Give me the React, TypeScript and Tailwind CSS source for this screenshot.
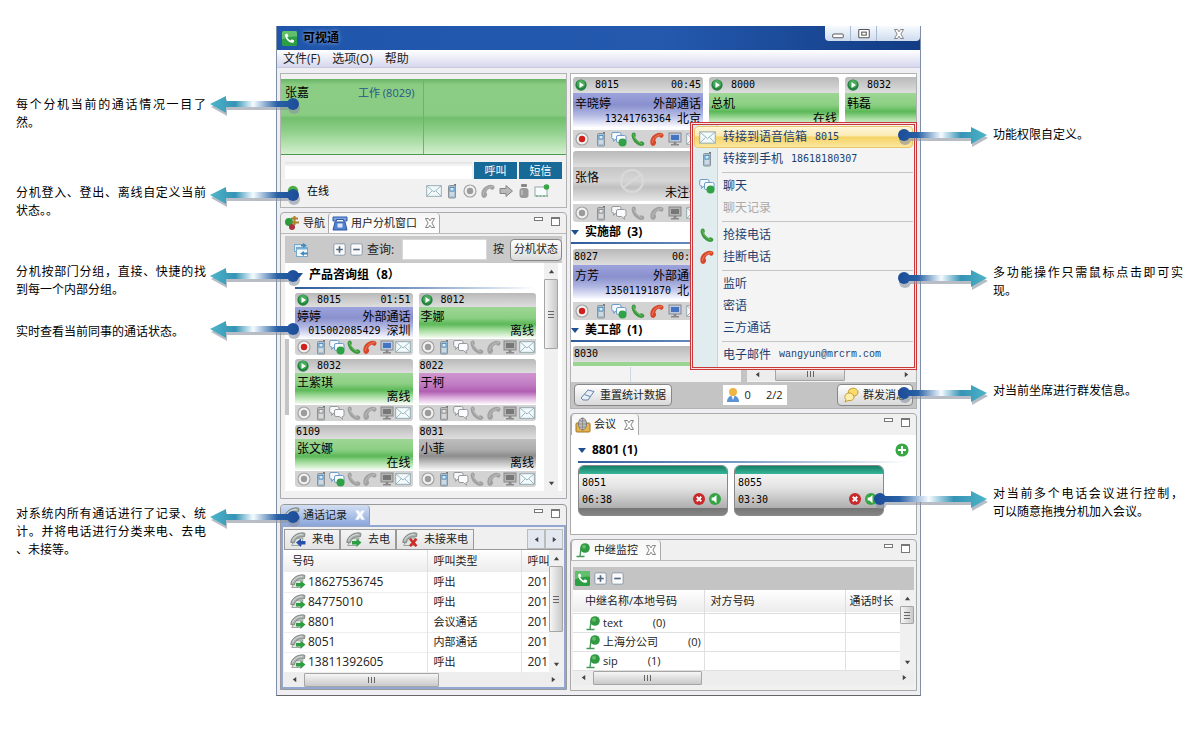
import type { ReactNode } from 'react'
import clsx from 'clsx'

// ── Types ─────────────────────────────────────────────────────────────
type Tone = 'blue' | 'green' | 'purple' | 'gray' | 'off'

interface Extension {
  number: string
  name: string
  tone: Tone
  play?: boolean
  time?: string
  status?: string
  phone?: string
  detail?: string
  active?: boolean
  mobile?: boolean
  chat?: boolean
}

interface Note {
  lines: string[]
  gap: string
  arrow: string
  long?: boolean
}

// ── Data ──────────────────────────────────────────────────────────────
const leftNotes: Note[] = [
  { lines: ['每个分机当前的通话情况一目了', '然。'], gap: 'mt-[70px]', arrow: '-top-px' },
  { lines: ['分机登入、登出、离线自定义当前', '状态。。'], gap: 'mt-[52px]', arrow: 'top-[2px]' },
  { lines: ['分机按部门分组，直接、快捷的找', '到每一个内部分组。'], gap: 'mt-[43px]', arrow: 'top-[4px]' },
  { lines: ['实时查看当前同事的通话状态。'], gap: 'mt-[24px]', arrow: '-top-[3px]' },
  { lines: ['对系统内所有通话进行了记录、统', '计。并将电话进行分类来电、去电', '、未接等。'], gap: 'mt-[164px]', arrow: 'top-[3px]' },
]

const rightNotes: Note[] = [
  { lines: ['功能权限自定义。'], gap: 'mt-[100px]', arrow: 'top-0' },
  { lines: ['多功能操作只需鼠标点击即可实', '现。'], gap: 'mt-[120px]', arrow: 'top-[5px]' },
  { lines: ['对当前坐席进行群发信息。'], gap: 'mt-[82px]', arrow: 'top-[2px]' },
  { lines: ['对当前多个电话会议进行控制，', '可以随意拖拽分机加入会议。'], gap: 'mt-[85px]', arrow: 'top-[5px]', long: true },
]

const groupMembers: Extension[] = [
  { number: '8015', name: '婷婷', tone: 'blue', play: true, time: '01:51', status: '外部通话', phone: '015002085429', detail: '深圳', active: true },
  { number: '8012', name: '李娜', tone: 'green', play: true, detail: '离线', mobile: true },
  { number: '8032', name: '王紫琪', tone: 'green', play: true, detail: '离线' },
  { number: '8022', name: '于柯', tone: 'purple' },
  { number: '6109', name: '张文娜', tone: 'green', detail: '在线', mobile: true, chat: true },
  { number: '8031', name: '小菲', tone: 'gray', detail: '离线', mobile: true },
]

const callLog = [
  { number: '18627536745', kind: '呼出' },
  { number: '84775010', kind: '呼出' },
  { number: '8801', kind: '会议通话' },
  { number: '8051', kind: '内部通话' },
  { number: '13811392605', kind: '呼出' },
]

const trunks = [
  { name: 'text', count: '(0)' },
  { name: '上海分公司', count: '(0)' },
  { name: 'sip', count: '(1)' },
]

const toneClass: Record<Tone, string> = {
  blue: 'bg-[linear-gradient(#9ca3dc,#8990cd_35%,#b3b9e4_65%,#fafaff)]',
  green: 'bg-[linear-gradient(#9ed695,#8ccf83_35%,#5bb958_55%,#a5dc9e_75%,#f4fcf2)]',
  purple: 'bg-[linear-gradient(#cf96d0,#c27ec4_35%,#b05fb2_60%,#dcaedd_80%,#fbf4fb)]',
  gray: 'bg-[linear-gradient(#bdbdbd,#acacac_35%,#8d8d8d_55%,#bebebe_75%,#f6f6f6)]',
  off: 'bg-[linear-gradient(#c6c6c6,#d6d6d6_40%,#c0c0c0_60%,#e6e6e6)]',
}

// ── Icons ─────────────────────────────────────────────────────────────
function Svg({ children, className = 'size-4' }: { children: ReactNode; className?: string }) {
  return (
    <svg viewBox="0 0 16 16" className={clsx('shrink-0', className)} fill="none" aria-hidden="true">
      {children}
    </svg>
  )
}

function PlayIcon() {
  return (
    <Svg className="size-3">
      <circle cx="8" cy="8" r="7.5" fill="#23843f" />
      <circle cx="8" cy="6.5" r="5.5" fill="#48a85d" />
      <path d="M6 4l6 4-6 4z" fill="#fff" />
    </Svg>
  )
}

function RecordIcon({ on }: { on?: boolean }) {
  return (
    <Svg>
      <circle cx="8" cy="8" r="6" fill="#f1f1f1" stroke="#a3a3a3" strokeWidth="1.2" />
      <circle cx="8" cy="8" r="3.2" fill={on ? '#d0201b' : '#9b9b9b'} />
    </Svg>
  )
}

function MobileIcon({ on }: { on?: boolean }) {
  return (
    <Svg>
      <rect x="10" y="1" width="2" height="3" fill="#777" />
      <rect x="4.500" y="2.500" width="7" height="12.500" rx="1" fill={on ? '#a9c1d2' : '#bcbcbc'} stroke="#8a9298" />
      <rect x="6" y="4.500" width="4" height="3.500" fill={on ? '#d5ecfb' : '#e9e9e9'} stroke={on ? '#3f86bd' : '#888'} strokeWidth=".8" />
      <path d="M6 10h4M6 12h4" stroke="#f2f2f2" />
    </Svg>
  )
}

function ChatIcon({ on }: { on?: boolean }) {
  const line = on ? '#6d9cc7' : '#999'
  return (
    <Svg>
      <path d="M2 1.500h6.500q1.500 0 1.500 1.500v3.500q0 1.500-1.500 1.500H5L2.500 10.500 3 8H2Q.7 8 .7 6.500V3Q.7 1.500 2 1.500z" fill="#f4f8fc" stroke={line} strokeLinejoin="round" />
      <path d="M7 4.500h6.500q1.500 0 1.500 1.500v4q0 1.500-1.500 1.500H13l.5 2.800L10.500 11.500H7q-1.500 0-1.500-1.500V6Q5.500 4.500 7 4.500z" fill="#fafcff" stroke={line} strokeLinejoin="round" />
      {on && <circle cx="11.500" cy="11.500" r="4" fill="#2fa147" />}
    </Svg>
  )
}

function AnswerIcon({ on }: { on?: boolean }) {
  return (
    <Svg>
      <path
        d="M2 2.500C3.200 1 5 1.300 5.600 3c.5 1.500.2 2.300-.5 3 .9 2 2.600 3.800 4.700 4.900.9-.8 2-.8 3.400.1 1.600 1 1.500 2.700 0 3.600-1.800 1-5 .2-7.800-2.600C2.600 9.200.8 4.800 2 2.500z"
        fill={on ? '#3b9a3f' : '#a0a0a0'}
      />
      <path d="M3.500 3c.5 4 3 7.500 8.500 10" stroke={on ? '#7cc36f' : '#c2c2c2'} strokeWidth=".8" />
    </Svg>
  )
}

function HangupIcon({ on }: { on?: boolean }) {
  return (
    <Svg>
      <path
        d="M2.400 14.300C.9 12.500.8 8.500 3.500 5.300 6.500 2 10.500.9 13.200 2.200c1.800.9 1.700 3 .4 4-1.100.9-2.600.6-3.400-.7C8.300 6 6.800 7.300 6.200 9.500c1.100.8 1.200 2.200.5 3.500-.9 1.900-3 2.700-4.300 1.300z"
        fill={on ? '#d9472b' : '#a2a2a2'}
      />
      <path d="M3.500 12c0-4 3-8 9.500-8.500" stroke={on ? '#ef8d70' : '#c4c4c4'} strokeWidth=".8" />
    </Svg>
  )
}

function MonitorIcon({ on }: { on?: boolean }) {
  return (
    <Svg>
      <rect x="2" y="2" width="12" height="9" fill={on ? '#b9c8e3' : '#b4b4b4'} stroke="#888" />
      <rect x="4" y="4" width="8" height="5" fill={on ? '#4573bd' : '#777'} />
      <path d="M6.500 11h3v2h2.500v1.500H4V13h2.500z" fill="#8a8a8a" />
    </Svg>
  )
}

function MailIcon({ className }: { className?: string }) {
  return (
    <Svg className={className}>
      <rect x=".7" y="2.700" width="14.600" height="10.600" fill="#f3fafc" stroke="#8fa6ae" strokeWidth=".9" />
      <path d="M1 3l7 6 7-6M1 13l5-5M15 13l-5-5" stroke="#8fb0bb" strokeWidth=".9" />
    </Svg>
  )
}

function HandsetLogo({ className = 'size-4' }: { className?: string }) {
  return (
    <Svg className={className}>
      <rect width="16" height="16" rx="2" fill="#2c9e43" />
      <path d="M0 2a2 2 0 012-2h12a2 2 0 012 2v4Q8 5 0 9z" fill="#62bf6b" />
      <path d="M3.500 3.500l2-.8 1.300 2.600-1.200 1.300c.8 1.600 2 2.700 3.600 3.500l1.300-1.300 2.600 1.400-.7 2C8.500 14 2.500 8.500 3.500 3.500z" fill="#fff" />
    </Svg>
  )
}

function CallIcon({ kind }: { kind: 'in' | 'out' | 'missed' }) {
  return (
    <Svg>
      <path d="M4.500 6.500L1.800 13.500h9.700L13 6z" fill="#dfe5e1" stroke="#8b918e" strokeWidth=".8" />
      <path d="M.8 10.500C1 5.500 5.500.8 13 .8l2 .7-.5 3.200-4 .3C7 5 5.200 7.500 4.300 10.800z" fill="#a9b0ac" stroke="#747a77" strokeWidth=".8" />
      <path d="M2.500 8.500C4 5 7.500 2.500 12.500 2.300" stroke="#dfe3e1" strokeWidth=".9" />
      {kind === 'out' && <path d="M6 9h4.500V6.500l5 4-5 4.500v-2.500H6z" fill="#2f9e43" />}
      {kind === 'in' && <path d="M15.500 9H11V6.500l-5 4 5 4.500v-2.500h4.500z" fill="#2750ad" />}
      {kind === 'missed' && <path d="M7 7.500l2-1.500 2 2.500L13.500 6l2 1.500-2.500 3 2.500 3-2 1.500-2.500-2.500L9 15l-2-1.500 2.500-3z" fill="#cf2a25" />}
    </Svg>
  )
}

function TrunkIcon() {
  return (
    <Svg>
      <path d="M1.500 14.500h8M5 14.500L6 6" stroke="#45975a" strokeWidth="1.400" />
      <circle cx="10" cy="6" r="4.800" fill="#2f9a41" />
      <circle cx="9" cy="4.800" r="2" fill="#62bc68" />
    </Svg>
  )
}

function NavIcon() {
  return (
    <Svg>
      <circle cx="5" cy="7" r="4" fill="#2e9b3d" />
      <circle cx="8" cy="12" r="3" fill="#a7333d" />
      <path d="M10.500 1v9M7 3.500h7M8 7.500h7" stroke="#a8802e" strokeWidth="2" />
    </Svg>
  )
}

function DeskPhoneIcon() {
  return (
    <Svg>
      <path d="M3 7h10l2 8H1z" fill="#5682cd" stroke="#2b58a5" />
      <path d="M1 2h14v4h-3.500V4.500h-7V6H1z" fill="#7ca2e2" stroke="#2b58a5" />
      <rect x="5.500" y="8.500" width="5" height="4" fill="#d9e6fb" />
    </Svg>
  )
}

function ConferenceIcon() {
  return (
    <Svg>
      <rect x="1" y="6" width="14" height="9" rx="1" fill="#e6b44b" stroke="#a27622" />
      <ellipse cx="7.500" cy="7" rx="4" ry="6" fill="#c2c2c2" stroke="#777" />
      <path d="M5 4h5M4 7h7M5 10h5M7.500 1v12" stroke="#848484" strokeWidth=".8" />
    </Svg>
  )
}

function SyncWindowIcon() {
  return (
    <Svg>
      <rect x="1.500" y="2.500" width="9" height="7" fill="#dcedf7" stroke="#79a8c8" />
      <rect x="3.500" y="5.500" width="11" height="9" fill="#f3f8fb" stroke="#79a8c8" />
      <path d="M4 6.500h10" stroke="#79b0d6" strokeWidth="2" />
      <path d="M10 1l4 2.500L10 6V4.500H8v-2h2zM11 9l-4 2.500 4 2.500v-1.500h4v-2h-4z" fill="#3f8bc3" />
    </Svg>
  )
}

function CloseX({ filled }: { filled?: boolean }) {
  return (
    <Svg className="size-3">
      <path
        d="M2 2h4l2 3 2-3h4l-3.500 6L14 14h-4l-2-3-2 3H2l3.500-6z"
        fill="#fff"
        stroke={filled ? '#dfe8f8' : '#777'}
        strokeWidth="1.200"
      />
    </Svg>
  )
}

function Caret() {
  return (
    <svg viewBox="0 0 8 5" className="h-[5px] w-2 shrink-0" aria-hidden="true">
      <path d="M0 0h8L4 5z" fill="#1f4f8f" />
    </svg>
  )
}

function SquareSign({ minus }: { minus?: boolean }) {
  return (
    <Svg className="size-[13px]">
      <rect x="1" y="1" width="14" height="14" rx="2" fill="#fafafa" stroke="#8797aa" strokeWidth="1.200" />
      <path d={minus ? 'M4 8h8' : 'M4 8h8M8 4v8'} stroke="#516580" strokeWidth="2" />
    </Svg>
  )
}

// ── Shared pieces ─────────────────────────────────────────────────────
function IconButton({ label, children, className }: { label: string; children: ReactNode; className?: string }) {
  return (
    <button type="button" aria-label={label} className={clsx('flex items-center justify-center', className)}>
      {children}
    </button>
  )
}

function Digits({ children, className }: { children: ReactNode; className?: string }) {
  return <span className={clsx("font-['DejaVu_Sans_Mono',monospace] text-[10px]", className)}>{children}</span>
}

function ArrowTip({ dir }: { dir: 'left' | 'right' | 'up' | 'down' }) {
  const paths = { left: 'M6 1v6L2 4z', right: 'M2 1v6l4-3z', up: 'M1 6h6L4 2z', down: 'M1 2h6L4 6z' }
  return (
    <svg viewBox="0 0 8 8" className="size-[7px]" aria-hidden="true">
      <path d={paths[dir]} fill="#444" />
    </svg>
  )
}

function HScroll({ thumb }: { thumb: string }) {
  return (
    <div className="flex h-[14px] items-stretch bg-[#ededed]">
      <IconButton label="向左滚动" className="w-5"><ArrowTip dir="left" /></IconButton>
      <div className="flex min-w-0 flex-1">
        <div className={clsx('flex items-center justify-center gap-0.5 rounded-[1px] border border-[#a5a5a5] bg-linear-to-b from-[#f6f6f6] to-[#c9c9c9]', thumb)}>
          <i className="h-1.5 w-px bg-[#666]" />
          <i className="h-1.5 w-px bg-[#666]" />
          <i className="h-1.5 w-px bg-[#666]" />
        </div>
      </div>
      <IconButton label="向右滚动" className="w-5"><ArrowTip dir="right" /></IconButton>
    </div>
  )
}

function VScroll({ thumb }: { thumb: string }) {
  return (
    <div className="flex w-[14px] shrink-0 flex-col bg-[#f0f0f0]">
      <IconButton label="向上滚动" className="h-4"><ArrowTip dir="up" /></IconButton>
      <div className="flex-1">
        <div className={clsx('flex flex-col items-center justify-center gap-0.5 rounded-[1px] border border-[#a5a5a5] bg-linear-to-r from-[#f6f6f6] to-[#c9c9c9]', thumb)}>
          <i className="h-px w-1.5 bg-[#666]" />
          <i className="h-px w-1.5 bg-[#666]" />
          <i className="h-px w-1.5 bg-[#666]" />
        </div>
      </div>
      <IconButton label="向下滚动" className="h-4"><ArrowTip dir="down" /></IconButton>
    </div>
  )
}

function PaneControls() {
  return (
    <div className="ml-auto flex items-start gap-2 pt-1 pr-1.5">
      <button type="button" aria-label="最小化" className="h-1 w-[9px] border border-[#777] bg-white" />
      <button type="button" aria-label="最大化" className="h-[9px] w-[9px] border border-t-2 border-[#777] bg-white" />
    </div>
  )
}

function GroupTitle({ children, className, end }: { children: ReactNode; className?: string; end?: ReactNode }) {
  return (
    <div>
      <div className={clsx('flex items-center gap-1.5 text-xs font-bold text-black', className)}>
        <Caret />
        <h3>{children}</h3>
        {end}
      </div>
      <div className="h-0.5 bg-linear-to-r from-[#2e5c9e] via-[#7e9cc6] to-white" />
    </div>
  )
}

function ActionIcons({ ext }: { ext: Extension }) {
  const on = ext.active
  return (
    <>
      <IconButton label="录音"><RecordIcon on={on} /></IconButton>
      <IconButton label="手机"><MobileIcon on={on || ext.mobile} /></IconButton>
      <IconButton label="聊天"><ChatIcon on={on || ext.chat} /></IconButton>
      <IconButton label="抢接"><AnswerIcon on={on} /></IconButton>
      <IconButton label="挂断"><HangupIcon on={on} /></IconButton>
      <IconButton label="监听"><MonitorIcon on={on} /></IconButton>
      <IconButton label="邮件"><MailIcon /></IconButton>
    </>
  )
}

function ExtensionCard({ ext, large }: { ext: Extension; large?: boolean }) {
  return (
    <article className={clsx('overflow-hidden rounded-t-[3px] text-xs whitespace-nowrap text-black', large && 'w-[130px] shrink-0')}>
      <div className={clsx('flex items-center bg-linear-to-b from-[#b9b9b9] to-[#dedede]', large ? 'h-4' : 'h-[14px]', ext.play ? 'gap-2 px-0.5' : 'px-px')}>
        {ext.play && <PlayIcon />}
        <Digits>{ext.number}</Digits>
        {ext.time && <Digits className="ml-auto">{ext.time}</Digits>}
      </div>
      <div className={clsx('relative px-0.5 pt-[3px]', toneClass[ext.tone], large ? 'h-[34px] leading-[15px]' : 'h-[31px] leading-[14px]')}>
        {ext.tone === 'off' && (
          <svg viewBox="0 0 28 28" className="absolute top-0 left-[45px] size-7" aria-hidden="true">
            <circle cx="14" cy="14" r="11" fill="none" stroke="#d9d9d9" strokeWidth="2" />
            <path d="M6 20L22 8" stroke="#d9d9d9" strokeWidth="2" />
          </svg>
        )}
        <div className="flex justify-between">
          <span>{ext.name}</span>
          <span>{ext.status}</span>
        </div>
        <div className="flex items-center justify-end gap-1.5">
          {ext.phone && <Digits>{ext.phone}</Digits>}
          <span>{ext.detail}</span>
        </div>
      </div>
      <div className={clsx('flex items-center justify-between rounded-b-[3px] bg-[#d3d3d3] px-px', large ? 'mt-[3px] h-[18px]' : 'mt-px h-4')}>
        <ActionIcons ext={ext} />
      </div>
    </article>
  )
}

function Tab({ icon, label, active, closable, tone }: { icon: ReactNode; label: string; active?: boolean; closable?: boolean; tone?: 'blue' }) {
  return (
    <button
      type="button"
      className={clsx(
        'flex h-full items-center gap-[3px] px-[3px] text-[11px] text-[#222]',
        tone === 'blue' && 'rounded-t border-r border-[#8b9dc9] bg-linear-to-b from-[#d3def2] to-[#8da7dc]',
        active && !tone && 'rounded-t border-x border-[#aaa] bg-linear-to-b from-[#f6f6f6] to-white',
      )}
    >
      {icon}
      <span>{label}</span>
      {closable && <span className="ml-1"><CloseX filled={tone === 'blue'} /></span>}
    </button>
  )
}

// ── Left panels ───────────────────────────────────────────────────────
function StatusPanel() {
  return (
    <section className="border border-[#b3b3b3] bg-[#f1f1f1] pt-[5px]">
      <div className="grid h-[76px] grid-cols-2 border-b border-[#4f9a51] bg-[linear-gradient(#69b467,#8bcd83_8%,#8acc83_48%,#72bf6d_52%,#8fd08a_70%,#d3efce)]">
        <div className="flex items-start justify-between border-r border-[#6fb26d] px-1 pt-1.5 pr-2">
          <span className="text-xs text-black">张嘉</span>
          <span className="text-[11px] text-[#28568b]">工作 (8029)</span>
        </div>
        <div />
      </div>
      <div className="flex gap-0.5 px-1 pt-[7px]">
        <input aria-label="呼叫号码" className="h-[17px] min-w-0 flex-1 bg-linear-to-b from-[#e0e0e0] to-white to-30%" />
        <button type="button" className="h-[17px] w-[43px] bg-[#176a98] text-[11px] leading-[17px] text-white">呼叫</button>
        <button type="button" className="h-[17px] w-[43px] bg-[#176a98] text-[11px] leading-[17px] text-white">短信</button>
      </div>
      <div className="mb-1 flex h-6 items-center pr-4 pl-1.5">
        <Svg className="size-3"><circle cx="8" cy="8" r="7" fill="#4cae3f" /></Svg>
        <span className="ml-2 text-[11px] text-black">在线</span>
        <div className="ml-auto flex items-center gap-0.5">
          <IconButton label="邮件"><MailIcon /></IconButton>
          <IconButton label="手机"><MobileIcon on /></IconButton>
          <IconButton label="录音"><RecordIcon /></IconButton>
          <IconButton label="挂断"><HangupIcon /></IconButton>
          <IconButton label="转接">
            <Svg><path d="M2 5.500h6V2.500l6.500 5.500L8 13.500v-3H2z" fill="#b9b9b9" stroke="#858585" /></Svg>
          </IconButton>
          <IconButton label="保持">
            <Svg>
              <rect x="5" y="1" width="6" height="3" rx="1" fill="#888" />
              <rect x="3.500" y="5" width="9" height="10" rx="3" fill="#9a9a9a" />
              <path d="M6 7v5" stroke="#d5d5d5" />
            </Svg>
          </IconButton>
          <IconButton label="新消息">
            <Svg>
              <rect x="1" y="4" width="12" height="9" fill="#f6fbfc" stroke="#96a9ad" />
              <path d="M2 13h12" stroke="#42a451" strokeDasharray="2 1.500" />
              <circle cx="12.500" cy="4" r="2.800" fill="#39a545" />
            </Svg>
          </IconButton>
        </div>
      </div>
    </section>
  )
}

function UserPanel() {
  return (
    <section className="rounded-t border border-[#aaa] bg-[#f0f0f0] pb-[7px]">
      <div className="flex h-[21px] border-b border-[#bbb]">
        <Tab icon={<NavIcon />} label="导航" />
        <Tab icon={<DeskPhoneIcon />} label="用户分机窗口" active closable />
        <PaneControls />
      </div>
      <div className="px-1 pt-0.5">
        <div className="flex h-[27px] items-center gap-1 bg-[#c9c9c9] pl-2">
          <IconButton label="同步"><SyncWindowIcon /></IconButton>
          <IconButton label="展开" className="ml-5"><SquareSign /></IconButton>
          <IconButton label="折叠"><SquareSign minus /></IconButton>
          <label htmlFor="ext-query" className="text-xs text-[#222]">查询:</label>
          <input id="ext-query" className="ml-1 h-[21px] min-w-0 flex-1 border border-[#d8d8d8] bg-white" />
          <span className="px-0.5 text-[11px] text-[#222]">按</span>
          <button type="button" className="h-[22px] rounded-sm border border-[#888] bg-linear-to-b from-white to-[#dcdcdc] px-[3px] text-[11px] text-[#222]">分机状态</button>
        </div>
        <div className="flex bg-white">
          <div className="my-auto h-[76px] w-1 bg-[#c4c4c4]" />
          <div className="min-w-0 flex-1 pr-2 pb-1 pl-1.5">
            <GroupTitle className="h-6">产品咨询组（8）</GroupTitle>
            <div className="grid grid-cols-2 gap-x-1.5 gap-y-1 pt-1">
              {groupMembers.map((ext) => (
                <ExtensionCard key={ext.number} ext={ext} />
              ))}
            </div>
          </div>
          <VScroll thumb="h-[70px]" />
          <div className="w-1" />
        </div>
      </div>
    </section>
  )
}

function SubTab({ kind, label }: { kind: 'in' | 'out' | 'missed'; label: string }) {
  return (
    <button type="button" className="flex items-center gap-1.5 border border-b-0 border-[#999] bg-linear-to-b from-[#f4f4f4] to-[#e4e4e4] px-[5px]">
      <CallIcon kind={kind} />
      {label}
    </button>
  )
}

function CallLogPanel() {
  return (
    <section className="mt-px rounded-t border border-[#999] bg-[#f0f0f0]">
      <div className="flex h-5">
        <Tab icon={<CallIcon kind="in" />} label="通话记录" tone="blue" closable />
        <PaneControls />
      </div>
      <div className="border-2 border-[#93a6cf] px-px pt-0.5">
        <div className="flex h-[21px] items-stretch border-b border-[#999] text-[11px] text-[#222]">
          <SubTab kind="in" label="来电" />
          <SubTab kind="out" label="去电" />
          <SubTab kind="missed" label="未接来电" />
          <IconButton label="上一个" className="ml-auto w-[18px] border border-[#bbb] bg-[#e3e8f0]"><ArrowTip dir="left" /></IconButton>
          <IconButton label="下一个" className="w-[18px] border border-[#bbb] bg-[#e3e8f0]"><ArrowTip dir="right" /></IconButton>
        </div>
        <div className="flex bg-white">
          <div className="min-w-0 flex-1 overflow-hidden">
            <table className="w-full table-fixed text-left whitespace-nowrap text-[#222]">
              <colgroup>
                <col className="w-[143px]" />
                <col className="w-[94px]" />
                <col />
              </colgroup>
              <thead>
                <tr className="h-[22px] bg-linear-to-b from-white to-[#ececec] text-[11px]">
                  <th className="border-r border-[#ddd] pl-2 font-normal">号码</th>
                  <th className="border-r border-[#ddd] pl-1.5 font-normal">呼叫类型</th>
                  <th className="overflow-hidden pl-1.5 font-normal">呼叫</th>
                </tr>
              </thead>
              <tbody>
                {callLog.map((call) => (
                  <tr key={call.number} className="h-[20px] border-b border-[#eee]">
                    <td className="border-r border-[#e4e4e4] p-0">
                      <span className="flex items-center gap-0.5 pl-1.5 text-xs leading-4"><CallIcon kind="out" />{call.number}</span>
                    </td>
                    <td className="border-r border-[#e4e4e4] py-0 pl-1.5 text-[11px] leading-4">{call.kind}</td>
                    <td className="overflow-hidden py-0 pl-1.5 text-xs leading-4">201</td>
                  </tr>
                ))}
              </tbody>
            </table>
          </div>
          <VScroll thumb="h-[66px]" />
        </div>
        <HScroll thumb="w-[135px]" />
      </div>
    </section>
  )
}

// ── Right panels ──────────────────────────────────────────────────────
function MenuRow({ icon, children, highlight, disabled }: { icon?: ReactNode; children: ReactNode; highlight?: boolean; disabled?: boolean }) {
  return (
    <button
      type="button"
      role="menuitem"
      disabled={disabled}
      className={clsx(
        'flex h-[22px] w-full items-center rounded-sm border text-left text-xs whitespace-nowrap',
        disabled ? 'text-[#aaa]' : 'text-[#1c3f70]',
        highlight ? 'border-[#e8c66a] bg-[linear-gradient(#fdf6dc,#fbe9b0_45%,#f6d264_50%,#fbe7a0)]' : 'border-transparent',
      )}
    >
      <span className="flex w-7 shrink-0 items-center pl-1">{icon}</span>
      {children}
    </button>
  )
}

function MenuLine() {
  return (
    <div role="separator" className="flex h-[5px] items-center pl-7">
      <div className="h-px flex-1 bg-[#c4c4c4]" />
    </div>
  )
}

function ContextMenu() {
  return (
    <div className="absolute top-12 -right-px z-10 w-[227px] border border-[#c8373a] bg-[#fbe3e3] p-px">
      <div role="menu" className="border border-[#c8373a] bg-[linear-gradient(90deg,#e0ecee_24px,#c9d3d5_24px,#c9d3d5_25px,#f4f4f4_25px)] p-px">
        <MenuRow icon={<MailIcon className="size-[17px]" />} highlight>转接到语音信箱<Digits className="ml-2">8015</Digits></MenuRow>
        <MenuRow icon={<MobileIcon on />}>转接到手机<Digits className="ml-2">18618180307</Digits></MenuRow>
        <MenuLine />
        <MenuRow icon={<ChatIcon on />}>聊天</MenuRow>
        <MenuRow disabled>聊天记录</MenuRow>
        <MenuLine />
        <MenuRow icon={<AnswerIcon on />}>抢接电话</MenuRow>
        <MenuRow icon={<HangupIcon on />}>挂断电话</MenuRow>
        <MenuLine />
        <MenuRow>监听</MenuRow>
        <MenuRow>密语</MenuRow>
        <MenuRow>三方通话</MenuRow>
        <MenuLine />
        <MenuRow>电子邮件<span className="ml-2 font-['Liberation_Mono',monospace] text-[10px]">wangyun@mrcrm.com</span></MenuRow>
      </div>
    </div>
  )
}

function BoardPanel() {
  return (
    <section className="relative border border-[#b3b3b3] bg-white">
      <div className="overflow-hidden pt-[3px]">
        <div className="flex gap-1.5 pl-0.5">
          <ExtensionCard large ext={{ number: '8015', name: '辛晓婷', tone: 'blue', play: true, time: '00:45', status: '外部通话', phone: '13241763364', detail: '北京', active: true }} />
          <ExtensionCard large ext={{ number: '8000', name: '总机', tone: 'green', play: true, detail: '在线' }} />
          <ExtensionCard large ext={{ number: '8032', name: '韩磊', tone: 'green', play: true }} />
        </div>
        <div className="flex pt-[3px] pl-0.5">
          <ExtensionCard large ext={{ number: '', name: '张恪', tone: 'off', detail: '未注册' }} />
        </div>
        <GroupTitle className="h-5">实施部&nbsp;&nbsp;(3)</GroupTitle>
        <div className="flex pt-[5px] pl-0.5">
          <ExtensionCard large ext={{ number: '8027', name: '方芳', tone: 'blue', time: '00:35', status: '外部通话', phone: '13501191870', detail: '北京', active: true }} />
        </div>
        <GroupTitle className="h-5">美工部&nbsp;&nbsp;(1)</GroupTitle>
        <div className="flex h-6 overflow-hidden pt-1 pl-0.5">
          <ExtensionCard large ext={{ number: '8030', name: '', tone: 'green' }} />
        </div>
      </div>
      <div className="flex h-4 bg-[#f3f3f3] pt-px">
        <div className="w-[60px] border-r border-[#ccd8e6]" />
        <div className="flex-1" />
        <div className="w-1.5 bg-[#c4c4c4]" />
        <div className="w-[169px]"><HScroll thumb="ml-2 w-[70px]" /></div>
      </div>
      <div className="flex h-[26px] items-center bg-[#c4c4c4] px-[3px] text-[11px] text-[#222]">
        <button type="button" className="flex h-[22px] items-center gap-1 rounded-sm border border-[#888] bg-linear-to-b from-white to-[#d9d9d9] px-[5px]">
          <Svg>
            <path d="M1 11l7-8 6 1.500-6 8.500H3z" fill="#e9eff7" stroke="#6484ab" />
            <path d="M4.500 7.500L10 9.500" stroke="#6484ab" />
          </Svg>
          重置统计数据
        </button>
        <div className="mx-auto flex h-5 w-16 items-center bg-white pl-0.5">
          <Svg>
            <path d="M2 15c0-9 12-9 12 0z" fill="#5b93d6" />
            <path d="M6.500 9L8 13l1.500-4z" fill="#fff" />
            <circle cx="8" cy="5" r="4" fill="#f0b542" />
          </Svg>
          <span className="ml-1">0</span>
          <span className="mr-1 ml-auto">2/2</span>
        </div>
        <button type="button" className="flex h-[22px] items-center gap-1 rounded-sm border border-[#888] bg-linear-to-b from-white to-[#d9d9d9] px-[5px]">
          <Svg>
            <path d="M7 2c4-2 8 0 8 3s-3 5-7 4L5 10l1-2.500C5 6 5 3 7 2z" fill="#f9dc71" stroke="#c89c2c" />
            <path d="M4 6.500c3-1.500 7 .5 7 3.500s-3 4-6 3.500L2 15l.8-2.500C1 10 2 7.500 4 6.500z" fill="#fdeeab" stroke="#c89c2c" />
          </Svg>
          群发消息
        </button>
      </div>
      <ContextMenu />
    </section>
  )
}

function ConferenceCard({ number, time }: { number: string; time: string }) {
  return (
    <article className="w-[150px] overflow-hidden rounded-md border border-[#888] bg-[linear-gradient(#fff,#e2e2e2_45%,#aeaeae_86%,#757575_86%,#858585)] text-black">
      <div className="h-2 bg-linear-to-b from-[#148066] to-[#38b699]" />
      <div className="px-[3px] pb-2">
        <div className="flex h-[17px] items-center"><Digits>{number}</Digits></div>
        <div className="flex h-4 items-center">
          <Digits className="mr-auto">{time}</Digits>
          <IconButton label="移出会议">
            <Svg className="size-3">
              <circle cx="8" cy="8" r="8" fill="#c8292b" />
              <path d="M5 5l6 6M11 5l-6 6" stroke="#fff" strokeWidth="2.500" />
            </Svg>
          </IconButton>
          <IconButton label="静音" className="mr-[3px] ml-1">
            <Svg className="size-3">
              <circle cx="8" cy="8" r="8" fill="#37a444" />
              <path d="M3.500 6H6l4-3.500v11L6 10H3.500z" fill="#fff" />
            </Svg>
          </IconButton>
        </div>
      </div>
    </article>
  )
}

function ConferencePanel() {
  return (
    <section className="rounded-t border border-[#aaa] bg-[#f0f0f0]">
      <div className="flex h-[21px]">
        <Tab icon={<ConferenceIcon />} label="会议" active closable />
        <PaneControls />
      </div>
      <div className="bg-white px-[7px] pt-1 pb-[18px]">
        <GroupTitle
          className="h-[22px]"
          end={
            <IconButton label="新建会议" className="ml-auto">
              <Svg className="size-[14px]">
                <circle cx="8" cy="8" r="7.500" fill="#38a845" />
                <path d="M3.500 8h9M8 3.500v9" stroke="#fff" strokeWidth="2.200" />
              </Svg>
            </IconButton>
          }
        >
          8801 (1)
        </GroupTitle>
        <div className="flex gap-1.5 pt-0.5">
          <ConferenceCard number="8051" time="06:38" />
          <ConferenceCard number="8055" time="03:30" />
        </div>
      </div>
    </section>
  )
}

function TrunkPanel() {
  return (
    <section className="rounded-t border border-[#aaa] bg-[#f0f0f0] pb-[5px]">
      <div className="flex h-[21px] border-b border-[#bbb]">
        <Tab icon={<TrunkIcon />} label="中继监控" active closable />
        <PaneControls />
      </div>
      <div className="px-0.5 pt-1.5">
        <div className="flex h-[23px] items-center gap-1 bg-[#c4c4c4] pl-0.5">
          <IconButton label="拨号"><HandsetLogo className="size-[15px]" /></IconButton>
          <IconButton label="展开"><SquareSign /></IconButton>
          <IconButton label="折叠"><SquareSign minus /></IconButton>
        </div>
        <div className="flex bg-white">
          <div className="min-w-0 flex-1 overflow-hidden">
            <table className="w-full table-fixed text-left text-[11px] whitespace-nowrap text-[#222]">
              <colgroup>
                <col className="w-[131px]" />
                <col className="w-[141px]" />
                <col />
              </colgroup>
              <thead>
                <tr className="h-[23px] border-b border-[#ddd] bg-linear-to-b from-white to-[#ececec]">
                  <th className="border-r border-[#ddd] pl-3 font-normal">中继名称/本地号码</th>
                  <th className="border-r border-[#ddd] pl-1.5 font-normal">对方号码</th>
                  <th className="pl-1 font-normal">通话时长</th>
                </tr>
              </thead>
              <tbody>
                {trunks.map((trunk) => (
                  <tr key={trunk.name} className="h-[19px] border-b border-[#e0e0e0]">
                    <td className="border-r border-[#e0e0e0] p-0">
                      <span className="flex items-center gap-0.5 pl-3 leading-4">
                        <TrunkIcon />
                        {trunk.name}
                        <span className="ml-7">{trunk.count}</span>
                      </span>
                    </td>
                    <td className="border-r border-[#e0e0e0] p-0" />
                    <td className="p-0" />
                  </tr>
                ))}
              </tbody>
            </table>
          </div>
          <VScroll thumb="h-[18px]" />
        </div>
        <HScroll thumb="w-[109px]" />
      </div>
    </section>
  )
}

// ── Callouts ──────────────────────────────────────────────────────────
function LeftArrow({ className }: { className: string }) {
  return (
    <svg viewBox="0 0 90 22" className={clsx('pointer-events-none absolute -right-[24px] z-20 h-[22px] w-[90px]', className)} aria-hidden="true">
      <defs>
        <linearGradient id="callout-left" gradientUnits="userSpaceOnUse" x1="0" x2="90" y1="0" y2="0">
          <stop offset="0" stopColor="#4fb6c8" />
          <stop offset=".28" stopColor="#3593b5" />
          <stop offset=".48" stopColor="#f4fbff" />
          <stop offset=".75" stopColor="#2760a4" />
          <stop offset="1" stopColor="#1c4b98" />
        </linearGradient>
      </defs>
      <g fill="#8a92a0" opacity=".6">
        <path d="M1 12L17 4v6h66v5H17v6z" />
        <circle cx="84" cy="13" r="6" />
      </g>
      <g fill="url(#callout-left)">
        <path d="M0 9L16 1v5h66v6H16v6z" />
        <circle cx="83" cy="9" r="6" />
      </g>
    </svg>
  )
}

function RightArrow({ className, long }: { className: string; long?: boolean }) {
  const w = long ? 114 : 90
  return (
    <svg
      viewBox={`0 0 ${w} 22`}
      className={clsx('pointer-events-none absolute z-20 h-[22px]', long ? '-left-[47px] w-[114px]' : '-left-[23px] w-[90px]', className)}
      aria-hidden="true"
    >
      <defs>
        <linearGradient id={`callout-right-${w}`} gradientUnits="userSpaceOnUse" x1="0" x2={w} y1="0" y2="0">
          <stop offset="0" stopColor="#1c4b98" />
          <stop offset=".22" stopColor="#2760a4" />
          <stop offset=".48" stopColor="#f4fbff" />
          <stop offset=".7" stopColor="#3593b5" />
          <stop offset="1" stopColor="#4fb6c8" />
        </linearGradient>
      </defs>
      <g fill="#8a92a0" opacity=".6">
        <circle cx="7" cy="13" r="6" />
        <path d={`M8 10H${w - 16}V4L${w} 12 ${w - 16} 21v-6H8z`} />
      </g>
      <g fill={`url(#callout-right-${w})`}>
        <circle cx="6" cy="9" r="6" />
        <path d={`M7 6H${w - 17}V1L${w - 1} 9 ${w - 17} 18v-6H7z`} />
      </g>
    </svg>
  )
}

function NoteText({ lines }: { lines: string[] }) {
  return (
    <p className="w-[190px] text-xs leading-[18px] text-black">
      {lines.map((line, i) => (
        <span key={line} className={clsx('block whitespace-nowrap', i < lines.length - 1 && '[text-align-last:justify]')}>
          {line}
        </span>
      ))}
    </p>
  )
}

// ── Window ────────────────────────────────────────────────────────────
function TitleBar() {
  return (
    <header className="flex h-6 items-center bg-[linear-gradient(90deg,#1f56ab,#2459ae_60%,#123c84)] pl-[5px]">
      <HandsetLogo className="size-[15px]" />
      <h1 className="ml-1.5 text-xs font-bold text-black [text-shadow:0_0_4px_#9db9e6]">可视通</h1>
      <div className="ml-auto flex h-[15px] self-start overflow-hidden rounded-b bg-linear-to-b from-[#f7fafe] to-[#cfdcee]">
        <IconButton label="最小化窗口" className="w-[26px] border-r border-[#a9b9cf]">
          <Svg className="size-3"><rect x="1" y="8" width="14" height="5" rx="1" fill="#fff" stroke="#555" strokeWidth="1.300" /></Svg>
        </IconButton>
        <IconButton label="还原窗口" className="w-[26px] border-r border-[#a9b9cf]">
          <Svg className="size-3">
            <rect x="1" y="2" width="14" height="11" rx="1" fill="#fff" stroke="#555" strokeWidth="1.400" />
            <rect x="5" y="5.500" width="6" height="4" stroke="#555" strokeWidth="1.400" />
          </Svg>
        </IconButton>
        <IconButton label="关闭窗口" className="w-[43px]"><CloseX /></IconButton>
      </div>
    </header>
  )
}

function App() {
  return (
    <div className="grid w-full grid-cols-[276fr_645fr_279fr] bg-white pt-[26px] font-['Liberation_Sans','Noto_Sans_CJK_SC',sans-serif]">
      {/* Left notes */}
      <aside>
        {leftNotes.map((note) => (
          <div key={note.lines[0]} className={clsx('relative pl-4', note.gap)}>
            <NoteText lines={note.lines} />
            <LeftArrow className={note.arrow} />
          </div>
        ))}
      </aside>

      {/* Application window */}
      <main className="min-w-0 self-start border border-t-0 border-[#7f8fa8] border-b-[#666] bg-[#efeff3] font-['Open_Sans','Noto_Sans_CJK_SC',sans-serif]">
        <TitleBar />
        <nav className="flex h-[18px] items-center gap-3 border-b border-[#c9c9dd] bg-linear-to-b from-white to-[#d6d7ee] px-1.5 text-xs text-[#222]">
          <button type="button">文件(F)</button>
          <button type="button">选项(O)</button>
          <button type="button">帮助</button>
        </nav>
        <div className="grid grid-cols-[287fr_347fr] gap-[3px] px-[3px] pt-[5px] pb-1">
          <div className="flex min-w-0 flex-col gap-1">
            <StatusPanel />
            <UserPanel />
            <CallLogPanel />
          </div>
          <div className="flex min-w-0 flex-col gap-1">
            <BoardPanel />
            <ConferencePanel />
            <TrunkPanel />
          </div>
        </div>
      </main>

      {/* Right notes */}
      <aside>
        {rightNotes.map((note) => (
          <div key={note.lines[0]} className={clsx('relative pl-[72px]', note.gap)}>
            <NoteText lines={note.lines} />
            <RightArrow className={note.arrow} long={note.long} />
          </div>
        ))}
      </aside>
    </div>
  )
}

export default App
